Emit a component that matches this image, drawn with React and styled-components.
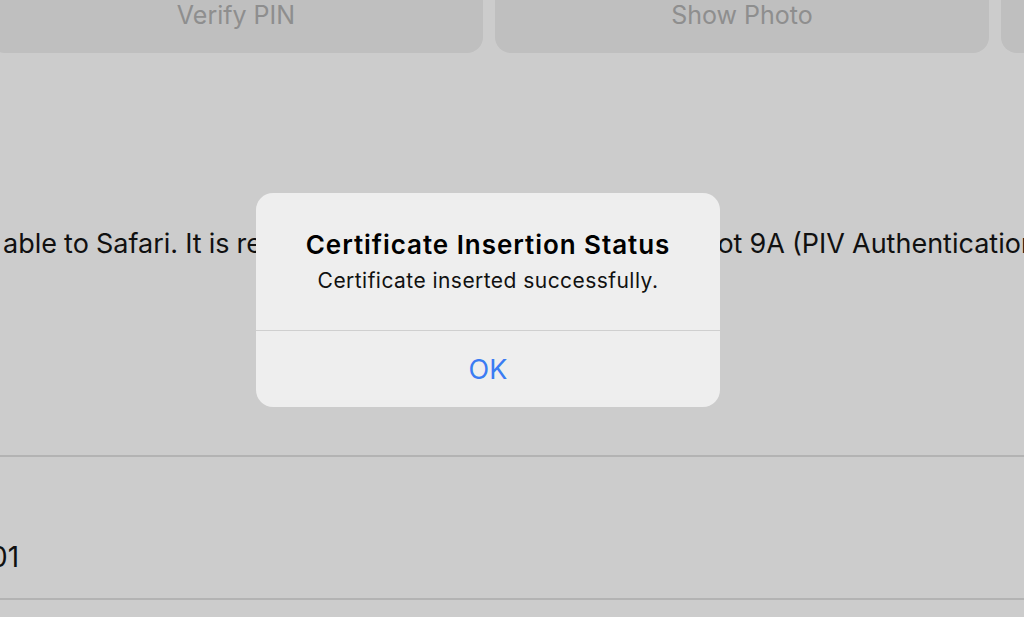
import styled, { createGlobalStyle } from "styled-components"

const GlobalStyle = createGlobalStyle`
  html, body {
    margin: 0;
    padding: 0;
    background: #ffffff;
  }
  body {
    font-family: Inter, "Noto Sans", "Liberation Sans", sans-serif;
    -webkit-font-smoothing: antialiased;
  }
`

const Page = styled.div`
  position: relative;
  width: 1024px;
  height: 617px;
  overflow: hidden;
  background: #ffffff;
  display: flex;
  flex-direction: column;
`

const ButtonRow = styled.div`
  display: flex;
  gap: 12px;
  margin: -23px 0 0 -11px;
`

const ActionButton = styled.div`
  flex-shrink: 0;
  width: 494px;
  height: 76px;
  border-radius: 16px;
  background: #efefef;
  color: #b2b2b2;
  font-size: 25px;
  display: flex;
  align-items: center;
  justify-content: center;
`

const Description = styled.p`
  margin: 174px 0 0 3px;
  white-space: nowrap;
  font-size: 27px;
  line-height: 34px;
  word-spacing: -0.5px;
  color: #151515;
`

const List = styled.div`
  margin-top: 194px;
  border-top: 2px solid #e0e0e0;
  border-bottom: 2px solid #e0e0e0;
`

const Row = styled.div`
  height: 141px;
  display: flex;
  align-items: flex-end;
  padding: 0 0 24px 0;
  box-sizing: border-box;
  font-size: 28px;
  color: #151515;
  margin-left: -39px;
`

const Dim = styled.div`
  position: absolute;
  inset: 0;
  background: rgba(0, 0, 0, 0.2);
`

const Alert = styled.div`
  position: absolute;
  left: 256px;
  top: 193px;
  width: 464px;
  height: 214px;
  border-radius: 17px;
  background: #eeeeee;
  display: flex;
  flex-direction: column;
  overflow: hidden;
`

const AlertBody = styled.div`
  padding: 37px 10px 36px;
  display: flex;
  flex-direction: column;
  align-items: center;
  gap: 8px;
  border-bottom: 1px solid #cfcfcf;
`

const AlertTitle = styled.div`
  font-size: 26px;
  line-height: 30px;
  font-weight: 600;
  letter-spacing: 0.95px;
  color: #000;
  white-space: nowrap;
`

const AlertMessage = styled.div`
  font-size: 21px;
  line-height: 26px;
  letter-spacing: 0.45px;
  color: #111;
  white-space: nowrap;
`

const AlertButton = styled.div`
  flex: 1;
  display: flex;
  align-items: center;
  justify-content: center;
  font-size: 27px;
  color: #3a7cf3;
`

export default function App() {
  return (
    <>
      <GlobalStyle />
      <Page>
        <ButtonRow>
          <ActionButton>Verify PIN</ActionButton>
          <ActionButton>Show Photo</ActionButton>
          <ActionButton>Show Certificate</ActionButton>
        </ButtonRow>
        <Description>
          able to Safari. It is recommended to put a certificate in slot 9A (PIV Authentication).
        </Description>
        <List>
          <Row>1001</Row>
        </List>
        <Dim />
        <Alert>
          <AlertBody>
            <AlertTitle>Certificate Insertion Status</AlertTitle>
            <AlertMessage>Certificate inserted successfully.</AlertMessage>
          </AlertBody>
          <AlertButton>OK</AlertButton>
        </Alert>
      </Page>
    </>
  )
}
